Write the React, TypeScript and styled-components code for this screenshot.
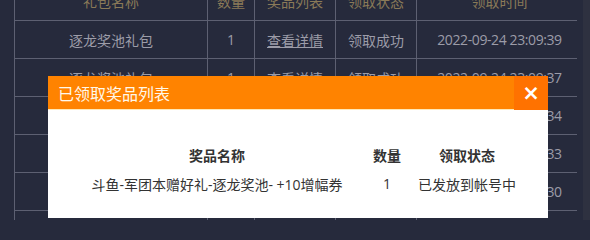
import React from "react";
import styled, { createGlobalStyle } from "styled-components";

const Global = createGlobalStyle`
  html, body { margin: 0; padding: 0; }
  body {
    width: 590px;
    height: 220px;
    overflow: hidden;
    background: #262a3c;
    font-family: "Open Sans", "Noto Sans CJK SC", sans-serif;
  }
`;

const Page = styled.div`
  position: relative;
  width: 590px;
  height: 220px;
  overflow: hidden;
  display: flex;
  background: #262a3c;
`;

const Viewport = styled.div`
  flex: 1;
  overflow: hidden;
  padding-left: 14px;
`;

const Scrollbar = styled.div`
  width: 7px;
  margin-left: 6px;
  background: #2e3140;
`;

const Grid = styled.table`
  border-collapse: collapse;
  margin-top: -18px;
  table-layout: fixed;
  width: 564px;
`;

const Th = styled.th<{ $w: number }>`
  width: ${(p) => p.$w}px;
  height: 38px;
  padding: 0;
  border: 1px solid #5d6072;
  border-top: none;
  color: #8a7a58;
  font-weight: normal;
  font-size: 14px;
  text-align: center;
`;

const Td = styled.td<{ $link?: boolean; $tight?: boolean }>`
  height: 37px;
  padding: 0;
  border: 1px solid #5d6072;
  color: #9c9ca8;
  font-size: 14px;
  text-align: center;
  white-space: nowrap;
  overflow: hidden;
  letter-spacing: ${(p) => (p.$tight ? "-0.4px" : "normal")};
  text-decoration: ${(p) => (p.$link ? "underline" : "none")};
`;

const Modal = styled.div`
  position: absolute;
  left: 48px;
  top: 76px;
  width: 500px;
  display: flex;
  flex-direction: column;
`;

const ModalHead = styled.div`
  height: 34px;
  display: flex;
  align-items: center;
  background: #ff8300;
  border-bottom: 1px solid #ffe9b8;
  box-sizing: border-box;
`;

const ModalTitle = styled.div`
  flex: 1;
  padding-left: 10px;
  color: #fff8ea;
  font-size: 16px;
  font-family: "Noto Sans CJK SC", sans-serif;
`;

const Close = styled.div`
  width: 34px;
  height: 34px;
  display: flex;
  align-items: center;
  justify-content: center;
  background: #ff7200;
  color: #fff;
  font-size: 21px;
  font-weight: bold;
  font-family: "DejaVu Sans", sans-serif;
`;

const ModalBody = styled.div`
  height: 108px;
  background: #ffffff;
  padding: 30px 31px 0 29px;
  box-sizing: border-box;
`;

const Inner = styled.table`
  width: 440px;
  border-collapse: collapse;
  table-layout: fixed;
`;

const ITh = styled.th<{ $w: number }>`
  width: ${(p) => p.$w}px;
  height: 29px;
  padding: 0;
  color: #333;
  font-size: 14px;
  font-weight: bold;
  text-align: center;
  font-family: "Noto Sans CJK SC", sans-serif;
`;

const ITd = styled.td`
  height: 29px;
  padding: 0;
  color: #333;
  font-size: 14px;
  text-align: center;
  white-space: nowrap;
`;

const rows = [
  { name: "逐龙奖池礼包", n: "1", s: "领取成功", t: "2022-09-24 23:09:39" },
  { name: "逐龙奖池礼包", n: "1", s: "领取成功", t: "2022-09-24 23:09:37" },
  { name: "逐龙奖池礼包", n: "1", s: "领取成功", t: "2022-09-24 23:09:34" },
  { name: "逐龙奖池礼包", n: "1", s: "领取成功", t: "2022-09-24 23:09:33" },
  { name: "逐龙奖池礼包", n: "1", s: "领取成功", t: "2022-09-24 23:09:30" },
  { name: "逐龙奖池礼包", n: "1", s: "领取成功", t: "2022-09-24 23:09:28" },
];

export default function App() {
  return (
    <>
      <Global />
      <Page>
        <Viewport>
          <Grid>
            <thead>
              <tr>
                <Th $w={192}>礼包名称</Th>
                <Th $w={46}>数量</Th>
                <Th $w={80}>奖品列表</Th>
                <Th $w={80}>领取状态</Th>
                <Th $w={165}>领取时间</Th>
              </tr>
            </thead>
            <tbody>
              {rows.map((r, i) => (
                <tr key={i}>
                  <Td>{r.name}</Td>
                  <Td>{r.n}</Td>
                  <Td $link>查看详情</Td>
                  <Td>{r.s}</Td>
                  <Td $tight>{r.t}</Td>
                </tr>
              ))}
            </tbody>
          </Grid>
        </Viewport>
        <Scrollbar />
        <Modal>
          <ModalHead>
            <ModalTitle>已领取奖品列表</ModalTitle>
            <Close>×</Close>
          </ModalHead>
          <ModalBody>
            <Inner>
              <thead>
                <tr>
                  <ITh $w={280}>奖品名称</ITh>
                  <ITh $w={60}>数量</ITh>
                  <ITh $w={100}>领取状态</ITh>
                </tr>
              </thead>
              <tbody>
                <tr>
                  <ITd>斗鱼-军团本赠好礼-逐龙奖池- +10增幅券</ITd>
                  <ITd>1</ITd>
                  <ITd>已发放到帐号中</ITd>
                </tr>
              </tbody>
            </Inner>
          </ModalBody>
        </Modal>
      </Page>
    </>
  );
}
